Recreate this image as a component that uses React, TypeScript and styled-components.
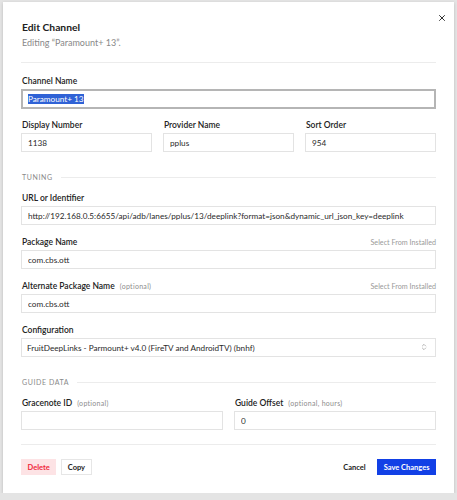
import React, { useEffect, useRef } from "react";
import styled, { createGlobalStyle } from "styled-components";
import { X, ChevronsUpDown } from "lucide-react";

const GlobalStyle = createGlobalStyle`
  html, body {
    margin: 0;
    padding: 0;
    background: #e4e4e4;
    font-family: Lato, "Noto Sans", sans-serif;
    color: #222;
  }
  * {
    box-sizing: border-box;
  }
`;

const ModalPanel = styled.div`
  position: relative;
  width: 451px;
  height: 491px;
  margin: 2px 0 0 3px;
  background: #fff;
  box-shadow: 0 1px 3px rgba(0, 0, 0, 0.18);
  padding: 18px 18px 0 18px;
  display: flex;
  flex-direction: column;
`;

const CloseButton = styled.button`
  position: absolute;
  top: 10px;
  right: 6px;
  border: none;
  background: none;
  padding: 0;
  width: 12px;
  height: 12px;
  color: #333;
  cursor: pointer;
  display: flex;
  align-items: center;
  justify-content: center;
`;

const Title = styled.h2`
  margin: 0 0 0 1px;
  font-size: 10.3px;
  font-weight: 700;
  line-height: 14px;
`;

const Subtitle = styled.p`
  margin: 3px 0 0 1px;
  font-size: 9px;
  line-height: 12px;
  color: #888;
`;

const Divider = styled.hr<{ $top: number; $bottom: number }>`
  border: none;
  border-top: 1px solid #ececec;
  margin: ${(p) => `${p.$top}px 0 ${p.$bottom}px 0`};
`;

const Field = styled.div`
  display: flex;
  flex-direction: column;
  min-width: 0;
`;

const LabelRow = styled.div`
  display: flex;
  align-items: center;
  justify-content: space-between;
  height: 12px;
  margin-bottom: 2px;
  padding-left: 1px;
`;

const Label = styled.label`
  font-size: 8.5px;
  font-weight: 600;
  line-height: 12px;
  color: #222;
`;

const Hint = styled.span`
  font-size: 7px;
  font-weight: 400;
  letter-spacing: 0.3px;
  color: #8c8c8c;
  margin-left: 5px;
`;

const SideLink = styled.span`
  font-size: 7.2px;
  color: #9a9a9a;
`;

const TextInput = styled.input`
  display: block;
  width: 100%;
  height: 19px;
  border: 1px solid #e3e3e3;
  background: #fff;
  font-family: inherit;
  font-size: 8.2px;
  color: #2a2a2a;
  padding: 0 6px;
  outline: none;
  &:focus {
    height: 20px;
    border: 2px solid #b5b5b5;
    padding: 0 5px;
  }
  &::selection {
    background: #2f62d6;
    color: #fff;
  }
`;

const SelectWrap = styled.div`
  position: relative;
`;

const Select = styled.select`
  display: block;
  width: 100%;
  height: 19px;
  border: 1px solid #e3e3e3;
  background: #fff;
  font-family: inherit;
  font-size: 8.2px;
  color: #2a2a2a;
  padding: 0 20px 0 5px;
  appearance: none;
  outline: none;
`;

const SelectIcon = styled.span`
  position: absolute;
  right: 8px;
  top: 5px;
  color: #888;
  display: flex;
  pointer-events: none;
`;

const Grid = styled.div<{ $cols: number }>`
  display: grid;
  grid-template-columns: ${(p) => `repeat(${p.$cols}, 1fr)`};
  column-gap: 11px;
`;

const Stack = styled.div<{ $gap: number }>`
  display: flex;
  flex-direction: column;
  gap: ${(p) => p.$gap}px;
`;

const SectionHeader = styled.div`
  display: flex;
  align-items: center;
  gap: 8px;
  height: 10px;
  margin: 20px 0 10px 0;
  font-size: 7px;
  letter-spacing: 0.6px;
  color: #8a8a8a;
  text-transform: uppercase;
  padding-left: 1px;
  &::after {
    content: "";
    flex: 1;
    border-top: 1px solid #ececec;
  }
`;

const Footer = styled.div`
  display: flex;
  align-items: center;
  justify-content: space-between;
`;

const ButtonGroup = styled.div`
  display: flex;
  align-items: center;
  gap: 5px;
`;

type Tone = "danger" | "plain" | "ghost" | "primary";

const tones: Record<Tone, string> = {
  danger: "background: #fde3e5; color: #f0283c; border-color: #fde3e5;",
  plain: "background: #fff; color: #222; border-color: #e6e6e6;",
  ghost: "background: transparent; color: #222; border-color: transparent;",
  primary: "background: #1240e6; color: #fff; border-color: #1240e6;",
};

const Button = styled.button<{ $tone: Tone }>`
  height: 16px;
  padding: 0 5.5px;
  border: 1px solid;
  font-family: inherit;
  font-size: 7.5px;
  font-weight: 700;
  cursor: pointer;
  ${(p) => tones[p.$tone]}
`;

const App = () => {
  const nameRef = useRef<HTMLInputElement>(null);

  useEffect(() => {
    nameRef.current?.focus();
    nameRef.current?.select();
  }, []);

  return (
    <>
      <GlobalStyle />
      <ModalPanel>
        <CloseButton aria-label="Close">
          <X size={10} strokeWidth={2.4} />
        </CloseButton>
        <Title>Edit Channel</Title>
        <Subtitle>Editing “Paramount+ 13”.</Subtitle>
        <Divider $top={13} $bottom={12} />

        <Stack $gap={10}>
          <Field>
            <LabelRow>
              <Label>Channel Name</Label>
            </LabelRow>
            <TextInput ref={nameRef} defaultValue="Paramount+ 13" />
          </Field>
          <Grid $cols={3}>
            <Field>
              <LabelRow>
                <Label>Display Number</Label>
              </LabelRow>
              <TextInput defaultValue="1138" />
            </Field>
            <Field>
              <LabelRow>
                <Label>Provider Name</Label>
              </LabelRow>
              <TextInput defaultValue="pplus" />
            </Field>
            <Field>
              <LabelRow>
                <Label>Sort Order</Label>
              </LabelRow>
              <TextInput defaultValue="954" />
            </Field>
          </Grid>
        </Stack>

        <SectionHeader>Tuning</SectionHeader>
        <Stack $gap={11}>
          <Field>
            <LabelRow>
              <Label>URL or Identifier</Label>
            </LabelRow>
            <TextInput defaultValue="http://192.168.0.5:6655/api/adb/lanes/pplus/13/deeplink?format=json&dynamic_url_json_key=deeplink" />
          </Field>
          <Field>
            <LabelRow>
              <Label>Package Name</Label>
              <SideLink>Select From Installed</SideLink>
            </LabelRow>
            <TextInput defaultValue="com.cbs.ott" />
          </Field>
          <Field>
            <LabelRow>
              <Label>
                Alternate Package Name<Hint>(optional)</Hint>
              </Label>
              <SideLink>Select From Installed</SideLink>
            </LabelRow>
            <TextInput defaultValue="com.cbs.ott" />
          </Field>
          <Field>
            <LabelRow>
              <Label>Configuration</Label>
            </LabelRow>
            <SelectWrap>
              <Select defaultValue="fdl-pplus">
                <option value="fdl-pplus">
                  FruitDeepLinks - Parmount+ v4.0 (FireTV and AndroidTV) (bnhf)
                </option>
              </Select>
              <SelectIcon>
                <ChevronsUpDown size={8} strokeWidth={1.8} />
              </SelectIcon>
            </SelectWrap>
          </Field>
        </Stack>

        <SectionHeader>Guide Data</SectionHeader>
        <Grid $cols={2}>
          <Field>
            <LabelRow>
              <Label>
                Gracenote ID<Hint>(optional)</Hint>
              </Label>
            </LabelRow>
            <TextInput defaultValue="" />
          </Field>
          <Field>
            <LabelRow>
              <Label>
                Guide Offset<Hint>(optional, hours)</Hint>
              </Label>
            </LabelRow>
            <TextInput defaultValue="0" />
          </Field>
        </Grid>

        <Divider $top={14} $bottom={14} />
        <Footer>
          <ButtonGroup>
            <Button $tone="danger">Delete</Button>
            <Button $tone="plain">Copy</Button>
          </ButtonGroup>
          <ButtonGroup>
            <Button $tone="ghost">Cancel</Button>
            <Button $tone="primary">Save Changes</Button>
          </ButtonGroup>
        </Footer>
      </ModalPanel>
    </>
  );
};

export default App;
